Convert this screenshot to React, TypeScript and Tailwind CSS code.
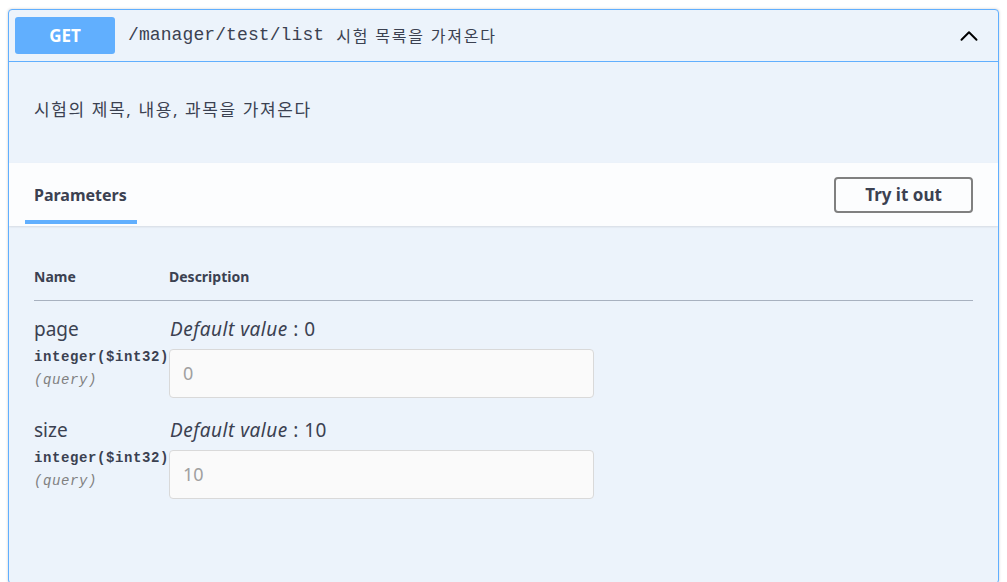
import { ChevronUp } from 'lucide-react'

const sans = 'font-["Noto_Sans","Noto_Sans_CJK_KR",sans-serif]'
const mono = 'font-["Liberation_Mono","Noto_Sans_CJK_KR",monospace]'

const params = [
  { name: 'page', def: '0' },
  { name: 'size', def: '10' },
]

export default function App() {
  return (
    <div className={`min-h-[582px] bg-white pt-[9px] px-[8px] text-[#3b4151] ${sans}`}>
      <div className="border border-[#61affe] rounded-[4px] bg-[#ecf3fb] shadow-[0_0_3px_rgba(0,0,0,0.19)] h-[575px] overflow-hidden flex flex-col">
        {/* summary */}
        <div className="h-[52px] shrink-0 border-b border-[#61affe] flex items-center px-[6px]">
          <div className="w-[100px] h-[37px] rounded-[3px] bg-[#61affe] text-white font-bold text-[17px] flex items-center justify-center">
            GET
          </div>
          <span className={`${mono} text-[18px] ml-[13px] tracking-[0.1px] text-[#3b4151]`}>/manager/test/list</span>
          <span className="text-[16px] ml-[12px] tracking-[1.8px] text-[#3b4151]">시험 목록을 가져온다</span>
          <ChevronUp className="ml-auto mr-[8px]" size={30} strokeWidth={1.6} color="#000" />
        </div>

        {/* description */}
        <div className="h-[101px] shrink-0 px-[25px] pt-[35px] text-[17px] tracking-[1.6px]">시험의 제목, 내용, 과목을 가져온다</div>

        {/* tab header */}
        <div className="h-[63px] shrink-0 bg-[#fcfdfe] shadow-[0_1px_2px_rgba(0,0,0,0.1)] flex items-center pl-[16px] pr-[25px]">
          <div className="self-end h-full flex flex-col">
            <div className="flex-1 flex items-center px-[9px] pt-[6px] font-bold text-[16px]">Parameters</div>
            <div className="h-[4px] w-[112px] bg-[#61affe] mb-[2px]" />
          </div>
          <button className="ml-auto w-[139px] h-[36px] border-2 border-[#808080] rounded-[4px] bg-transparent font-bold text-[17px] text-[#3b4151]">
            Try it out
          </button>
        </div>

        {/* parameters table */}
        <div className="px-[25px] pt-[40px]">
          <div className="flex border-b border-[#a8b1bf] h-[35px] text-[14px] font-bold">
            <div className="w-[135px]">Name</div>
            <div>Description</div>
          </div>
          {params.map((p) => (
            <div key={p.name} className="flex pt-[14px] h-[101px]">
              <div className="w-[135px]">
                <div className="text-[19px] leading-[28px]">{p.name}</div>
                <div className={`${mono} text-[14px] font-bold tracking-[0.6px] leading-[22px] mt-[3px] whitespace-nowrap`}>integer($int32)</div>
                <div className={`${mono} text-[14px] italic text-[#808080] tracking-[0.6px] leading-[24px]`}>(query)</div>
              </div>
              <div>
                <div className="text-[19px] leading-[28px] pl-[1px] tracking-[0.5px]">
                  <i>Default value</i> : {p.def}
                </div>
                <div className="mt-[6px] w-[425px] h-[49px] rounded-[4px] border border-[#d9d9d9] bg-[#fafafa] flex items-center px-[13px] text-[18px] text-[#a0a0a0]">
                  {p.def}
                </div>
              </div>
            </div>
          ))}
        </div>
      </div>
    </div>
  )
}
